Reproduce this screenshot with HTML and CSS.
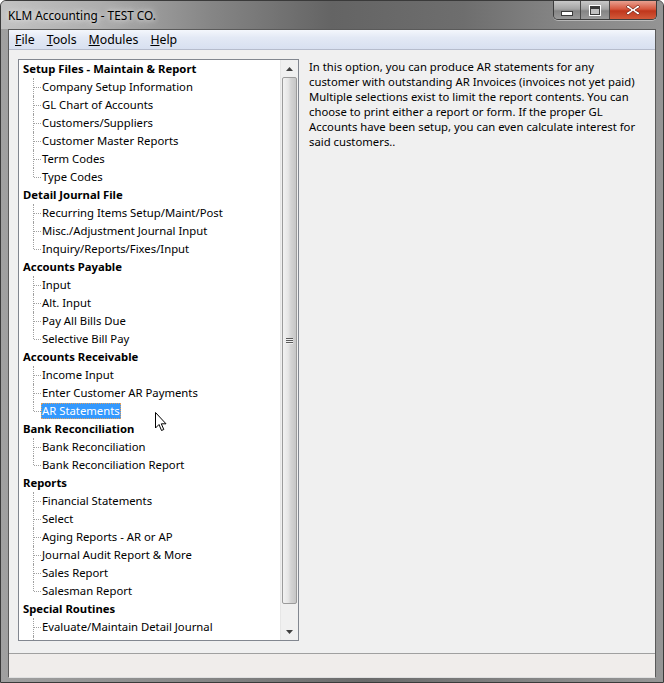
FILE: index.html
```html
<!DOCTYPE html>
<html lang="en">
<head>
    <meta charset="UTF-8">
    <title>KLM Accounting - TEST CO.</title>
    <link rel="stylesheet" href="styles.css">
</head>
<body>
    <div class="window">
        <div class="titlebar">
            <span class="title">KLM Accounting - TEST CO.</span>
            <div class="caption-buttons">
                <div class="cbtn min"><span class="min-bar"></span></div>
                <div class="cbtn max"><span class="max-box"></span></div>
                <div class="cbtn close">
                    <svg width="16" height="12" viewBox="0 0 16 12">
                        <path d="M3 1 L8 5 L13 1 L15 3 L10 6 L15 9 L13 11 L8 7 L3 11 L1 9 L6 6 L1 3 Z" fill="#fff" stroke="#7a2a1a" stroke-width="0.8"/>
                    </svg>
                </div>
            </div>
        </div>
        <div class="client">
            <div class="menubar">
                <span class="menu"><u>F</u>ile</span>
                <span class="menu"><u>T</u>ools</span>
                <span class="menu"><u>M</u>odules</span>
                <span class="menu"><u>H</u>elp</span>
            </div>
            <div class="main">
                <div class="tree">
                    <div class="tree-items">
                        <div class="group">
                            <div class="parent">Setup Files - Maintain &amp; Report</div>
                            <div class="child">Company Setup Information</div>
                            <div class="child">GL Chart of Accounts</div>
                            <div class="child">Customers/Suppliers</div>
                            <div class="child">Customer Master Reports</div>
                            <div class="child">Term Codes</div>
                            <div class="child last">Type Codes</div>
                        </div>
                        <div class="group">
                            <div class="parent">Detail Journal File</div>
                            <div class="child">Recurring Items Setup/Maint/Post</div>
                            <div class="child">Misc./Adjustment Journal Input</div>
                            <div class="child last">Inquiry/Reports/Fixes/Input</div>
                        </div>
                        <div class="group">
                            <div class="parent">Accounts Payable</div>
                            <div class="child">Input</div>
                            <div class="child">Alt. Input</div>
                            <div class="child">Pay All Bills Due</div>
                            <div class="child last">Selective Bill Pay</div>
                        </div>
                        <div class="group">
                            <div class="parent">Accounts Receivable</div>
                            <div class="child">Income Input</div>
                            <div class="child">Enter Customer AR Payments</div>
                            <div class="child last"><span class="selected">AR Statements</span></div>
                        </div>
                        <div class="group">
                            <div class="parent">Bank Reconciliation</div>
                            <div class="child">Bank Reconciliation</div>
                            <div class="child last">Bank Reconciliation Report</div>
                        </div>
                        <div class="group">
                            <div class="parent">Reports</div>
                            <div class="child">Financial Statements</div>
                            <div class="child">Select</div>
                            <div class="child">Aging Reports - AR or AP</div>
                            <div class="child">Journal Audit Report &amp; More</div>
                            <div class="child">Sales Report</div>
                            <div class="child last">Salesman Report</div>
                        </div>
                        <div class="group">
                            <div class="parent">Special Routines</div>
                            <div class="child">Evaluate/Maintain Detail Journal</div>
                            <div class="child">Accounting User Fed Checks</div>
                        </div>
                    </div>
                    <div class="scrollbar">
                        <div class="arrow up">
                            <svg width="7" height="4" viewBox="0 0 7 4"><path d="M0 4 L3.5 0 L7 4 Z" fill="#404040"/></svg>
                        </div>
                        <div class="track">
                            <div class="thumb"><span class="grip"></span></div>
                        </div>
                        <div class="arrow down">
                            <svg width="7" height="4" viewBox="0 0 7 4"><path d="M0 0 L7 0 L3.5 4 Z" fill="#404040"/></svg>
                        </div>
                    </div>
                </div>
                <div class="description">
                    In this option, you can produce AR statements for any<br>
                    customer with outstanding AR Invoices (invoices not yet paid)<br>
                    Multiple selections exist to limit the report contents. You can<br>
                    choose to print either a report or form. If the proper GL<br>
                    Accounts have been setup, you can even calculate interest for<br>
                    said customers..
                </div>
            </div>
            <div class="statusbar"></div>
        </div>
        <svg class="cursor" width="12" height="20" viewBox="0 0 12 20">
            <path d="M0.5 0.5 L0.5 16 L4 12.5 L6.5 18.5 L8.8 17.5 L6.3 11.8 L11 11.8 Z" fill="#fff" stroke="#000" stroke-width="1"/>
        </svg>
    </div>
</body>
</html>
```

FILE: styles.css
```css
body {
    margin: 0;
    font-family: "Noto Sans", "Open Sans", sans-serif;
    font-size: 11.3px;
    color: #000;
    background-color: #fff;
}
.window {
    position: relative;
    width: 664px;
    height: 683px;
    box-sizing: border-box;
    border: 1px solid #3a3a3a;
    border-radius: 6px 6px 0 0;
    background: linear-gradient(to right, #a0a0a0 0%, #868686 30%, #6a6a6a 55%, #848484 80%, #969696 100%);
    display: flex;
    flex-direction: column;
    overflow: hidden;
}
.titlebar {
    height: 28px;
    display: flex;
    justify-content: space-between;
    align-items: flex-start;
    background: linear-gradient(to right, #c2c2c2 0%, #adadad 15%, #858585 32%, #646464 50%, #6e6e6e 70%, #868686 85%, #949494 100%);
}
.title {
    margin: 6px 0 0 7px;
    font-size: 11.8px;
    color: #000;
    text-shadow: 0 0 8px #e8e8e8, 0 0 4px #e8e8e8;
}
.caption-buttons {
    display: flex;
    margin-right: 6px;
    border: 1px solid #3c3c3c;
    border-top: none;
    border-radius: 0 0 5px 5px;
    overflow: hidden;
    box-shadow: 0 1px 0 rgba(255, 255, 255, 0.4);
}
.cbtn {
    height: 18px;
    display: flex;
    align-items: center;
    justify-content: center;
}
.cbtn.min,
.cbtn.max {
    width: 26px;
    background: linear-gradient(to bottom, #c8c8c8 0%, #a4a4a4 45%, #858585 55%, #9a9a9a 100%);
    border-right: 1px solid #4a4a4a;
}
.cbtn.max {
    width: 28px;
}
.cbtn.close {
    width: 46px;
    background: linear-gradient(to bottom, #e8a090 0%, #d6573e 45%, #c0361c 55%, #d25a3a 100%);
}
.min-bar {
    width: 10px;
    height: 3px;
    margin-top: 6px;
    background-color: #fff;
    border: 1px solid #3a3a3a;
}
.max-box {
    width: 8px;
    height: 5px;
    border: 1px solid #3a3a3a;
    border-top-width: 3px;
    background-color: #c0c0c0;
    outline: 1px solid #fff;
}
.client {
    margin: 0 7px;
    display: flex;
    flex-direction: column;
    background-color: #f0f0f0;
    border: 1px solid #5a5a5a;
    border-bottom-color: #e0e0e0;
}
.menubar {
    height: 19px;
    display: flex;
    align-items: center;
    padding-left: 6px;
    background: linear-gradient(to bottom, #f4f7fc 0%, #e3e9f5 40%, #d8e0f0 100%);
    border-bottom: 1px solid #b6bccc;
}
.menu {
    padding: 0 8px 0 0;
    margin-right: 4px;
    font-size: 12.3px;
}
.main {
    height: 603px;
    display: flex;
    padding: 9px 0 0 9px;
    box-sizing: border-box;
}
.tree {
    width: 281px;
    height: 582px;
    box-sizing: border-box;
    border: 1px solid #828790;
    background-color: #fff;
    display: flex;
    overflow: hidden;
}
.tree-items {
    flex: 1;
    overflow: hidden;
}
.parent {
    height: 18px;
    line-height: 18px;
    padding-left: 4px;
    font-weight: bold;
    white-space: nowrap;
}
.child {
    position: relative;
    height: 18px;
    line-height: 18px;
    padding-left: 23px;
    white-space: nowrap;
}
.child::before {
    content: "";
    position: absolute;
    left: 14px;
    top: 0;
    height: 18px;
    border-left: 1px dotted #a0a0a0;
}
.child.last::before {
    height: 9px;
}
.child::after {
    content: "";
    position: absolute;
    left: 15px;
    top: 9px;
    width: 7px;
    border-top: 1px dotted #a0a0a0;
}
.selected {
    display: inline-block;
    height: 16px;
    line-height: 16px;
    padding: 0 1px;
    margin-left: -1px;
    background-color: #3399ff;
    color: #fff;
    outline: 1px dotted #e0a060;
    outline-offset: -1px;
}
.scrollbar {
    width: 17px;
    display: flex;
    flex-direction: column;
    background-color: #f0f0f0;
    border-left: 1px solid #e6e6e6;
}
.arrow {
    height: 17px;
    display: flex;
    align-items: center;
    justify-content: center;
}
.track {
    flex: 1;
    padding: 0 1px;
}
.thumb {
    height: 527px;
    box-sizing: border-box;
    border: 1px solid #9b9b9b;
    border-radius: 2px;
    background: linear-gradient(to right, #f2f2f2 0%, #e6e6e6 40%, #d4d4d4 60%, #c6c6c6 100%);
    display: flex;
    align-items: center;
    justify-content: center;
}
.grip {
    width: 7px;
    height: 6px;
    background: repeating-linear-gradient(to bottom, #5a5a5a 0, #5a5a5a 1px, #f0f0f0 1px, #f0f0f0 2px);
}
.description {
    padding: 0 0 0 10px;
    line-height: 15px;
    margin-top: 0;
    white-space: nowrap;
}
.statusbar {
    height: 23px;
    background-color: #f0edeb;
    border-top: 1px solid #a0a0a0;
}
.cursor {
    position: absolute;
    left: 154px;
    top: 411px;
}
```
